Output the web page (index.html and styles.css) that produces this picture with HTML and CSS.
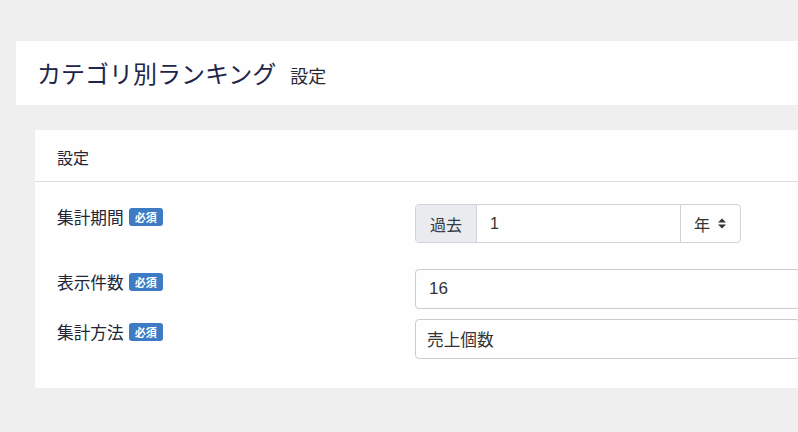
FILE: index.html
```html
<!DOCTYPE html>
<html lang="ja">
<head>
<meta charset="utf-8">
<link rel="stylesheet" href="styles.css">
</head>
<body>
<div class="page">
  <header class="page-header">
    <h1 class="title">カテゴリ別ランキング<small class="subtitle">設定</small></h1>
  </header>
  <section class="card">
    <div class="card-header">設定</div>
    <div class="card-body">
      <div class="row row-first">
        <div class="label">集計期間<span class="badge">必須</span></div>
        <div class="control">
          <div class="input-group">
            <span class="addon">過去</span>
            <span class="ig-input">1</span>
            <span class="ig-select">年
              <svg class="updown" width="8" height="11" viewBox="0 0 8 11"><path d="M0 4.5 L4 0.5 L8 4.5 Z M0 6.5 L8 6.5 L4 10.5 Z" fill="#333"/></svg>
            </span>
          </div>
        </div>
      </div>
      <div class="row row-second">
        <div class="label">表示件数<span class="badge">必須</span></div>
        <div class="control"><div class="input num">16</div></div>
      </div>
      <div class="row">
        <div class="label">集計方法<span class="badge">必須</span></div>
        <div class="control"><div class="input">売上個数</div></div>
      </div>
    </div>
  </section>
</div>
</body>
</html>
```
FILE: styles.css
```css
html, body {
  margin: 0;
  padding: 0;
}
body {
  background: #efefef;
  overflow: hidden;
  width: 798px;
  height: 432px;
  font-family: "Noto Sans CJK JP", "Liberation Sans", sans-serif;
  color: #222;
}
.page {
  width: 1200px;
  padding-top: 41px;
}
.page-header {
  margin-left: 16px;
  height: 64px;
  background: #fdfefd;
  display: flex;
  align-items: center;
  padding-left: 21px;
}
.title {
  margin: 0;
  font-size: 24px;
  font-weight: 400;
  color: #1f2548;
  line-height: 1;
  display: flex;
  align-items: baseline;
}
.subtitle {
  font-size: 18px;
  color: #2a2a35;
  margin-left: 14px;
}
.card {
  margin-top: 25px;
  margin-left: 35px;
  background: #fdfefd;
}
.card-header {
  height: 52px;
  box-sizing: border-box;
  border-bottom: 1px solid #dddddd;
  display: flex;
  align-items: center;
  padding-left: 22px;
  padding-top: 2px;
  font-size: 16px;
  color: #222638;
}
.card-body {
  padding: 22px 0 29px 22px;
}
.row {
  display: flex;
}
.row-first {
  margin-bottom: 26px;
}
.row-second {
  margin-bottom: 10px;
}
.label {
  width: 358px;
  font-size: 16.7px;
  line-height: 24px;
  padding-top: 1px;
  color: #222638;
  display: flex;
  align-items: center;
  height: 24px;
}
.badge {
  display: inline-block;
  margin-left: 5px;
  background: #3d7cc4;
  color: #fff;
  font-size: 11px;
  font-weight: 700;
  line-height: 18px;
  height: 18px;
  padding: 0 6px;
  border-radius: 3px;
}
.control {
  flex: 1;
  padding-right: 400px;
}
.input-group {
  display: flex;
  width: 326px;
  height: 39px;
  box-sizing: border-box;
  border: 1px solid #cfd3d8;
  border-radius: 4px;
  font-size: 16px;
  color: #444;
}
.addon {
  width: 60px;
  background: #e9ebee;
  border-right: 1px solid #cfd3d8;
  border-radius: 4px 0 0 4px;
  display: flex;
  align-items: center;
  justify-content: center;
  color: #333a48;
}
.ig-input {
  flex: 1;
  display: flex;
  align-items: center;
  padding-left: 13px;
  font-family: "Liberation Sans", sans-serif;
  color: #333;
}
.ig-select {
  width: 60px;
  border-left: 1px solid #cfd3d8;
  display: flex;
  align-items: center;
  padding-left: 13px;
  box-sizing: border-box;
  color: #333;
}
.updown {
  margin-left: 8px;
}
.input {
  height: 40px;
  box-sizing: border-box;
  border: 1px solid #cccccc;
  border-radius: 4px;
  display: flex;
  align-items: center;
  padding-left: 11px;
  font-size: 16.7px;
  color: #333;
}
.input.num {
  padding-left: 13px;
  font-family: "Liberation Sans", sans-serif;
  font-size: 17px;
}
```
